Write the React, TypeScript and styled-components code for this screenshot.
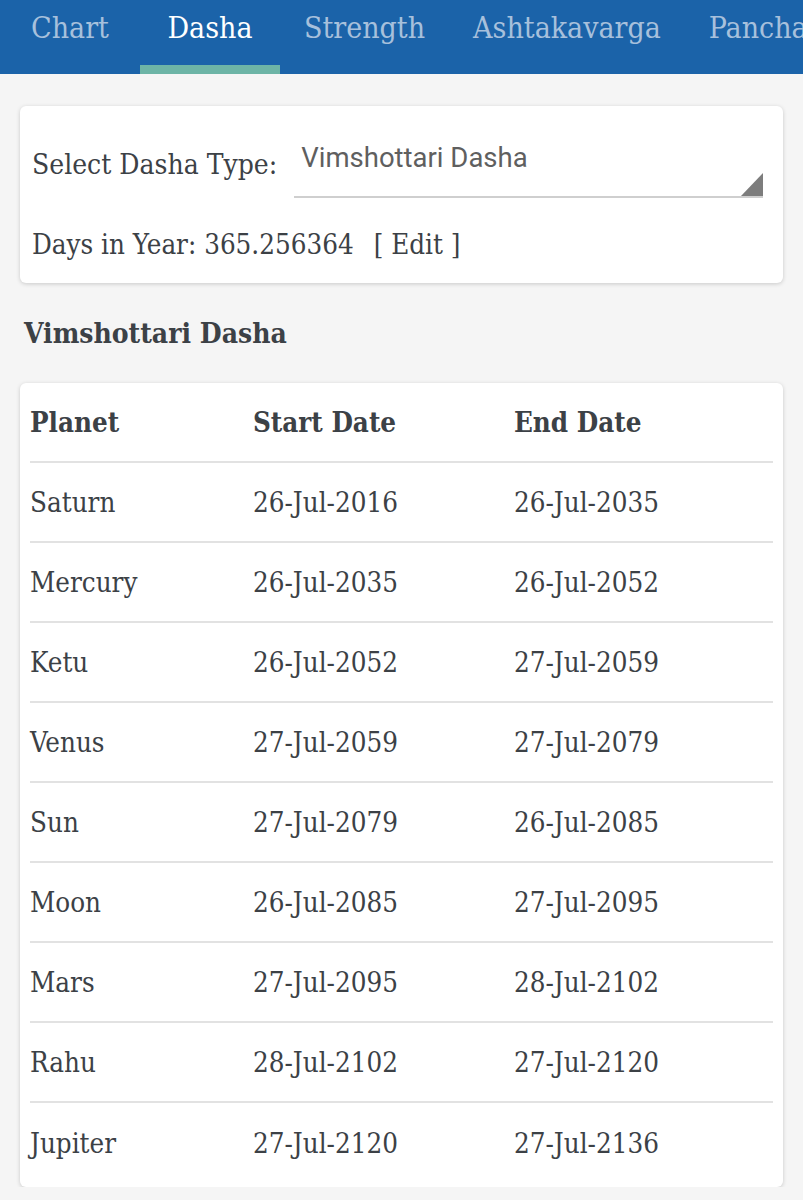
import React from "react"
import styled, { createGlobalStyle } from "styled-components"

const GlobalStyle = createGlobalStyle`
  body {
    margin: 0;
    background: #f5f5f5;
    font-family: "DejaVu Serif Condensed", "DejaVu Serif", serif;
    color: #3c4146;
  }
`

const tabs = ["Chart", "Dasha", "Strength", "Ashtakavarga", "Panchang"]

const dashas = [
  { planet: "Saturn", start: "26-Jul-2016", end: "26-Jul-2035" },
  { planet: "Mercury", start: "26-Jul-2035", end: "26-Jul-2052" },
  { planet: "Ketu", start: "26-Jul-2052", end: "27-Jul-2059" },
  { planet: "Venus", start: "27-Jul-2059", end: "27-Jul-2079" },
  { planet: "Sun", start: "27-Jul-2079", end: "26-Jul-2085" },
  { planet: "Moon", start: "26-Jul-2085", end: "27-Jul-2095" },
  { planet: "Mars", start: "27-Jul-2095", end: "28-Jul-2102" },
  { planet: "Rahu", start: "28-Jul-2102", end: "27-Jul-2120" },
  { planet: "Jupiter", start: "27-Jul-2120", end: "27-Jul-2136" },
]

export default function App() {
  const active = "Dasha"

  return (
    <>
      <GlobalStyle />
      <S.TabBar>
        {tabs.map((t) => (
          <S.Tab key={t} active={t === active}>
            {t}
          </S.Tab>
        ))}
      </S.TabBar>
      <S.Content>
        <S.Card>
          <S.SelectRow>
            <S.Label>Select Dasha Type:</S.Label>
            <S.Select>
              <S.SelectValue>Vimshottari Dasha</S.SelectValue>
              <S.Arrow />
            </S.Select>
          </S.SelectRow>
          <S.DaysRow>
            Days in Year: 365.256364
            <S.EditLink>[ Edit ]</S.EditLink>
          </S.DaysRow>
        </S.Card>
        <S.Heading>Vimshottari Dasha</S.Heading>
        <S.TableCard>
          <S.Row header>
            <div>Planet</div>
            <div>Start Date</div>
            <div>End Date</div>
          </S.Row>
          {dashas.map((d) => (
            <S.Row key={d.planet}>
              <div>{d.planet}</div>
              <div>{d.start}</div>
              <div>{d.end}</div>
            </S.Row>
          ))}
        </S.TableCard>
      </S.Content>
    </>
  )
}

const S = {
  TabBar: styled.div`
    display: flex;
    height: 74px;
    background: #1b63a9;
    overflow: hidden;
    white-space: nowrap;
  `,
  Tab: styled.div<{ active?: boolean }>`
    flex: none;
    min-width: 140px;
    box-sizing: border-box;
    padding: 0 24px 10px;
    display: flex;
    align-items: center;
    justify-content: center;
    font-size: 30px;
    color: ${({ active }) => (active ? "#ffffff" : "#a7c0dc")};
    border-bottom: 9px solid ${({ active }) => (active ? "#6db4a6" : "transparent")};
  `,
  Content: styled.div`
    padding: 32px 20px 0;
  `,
  Card: styled.div`
    background: #fff;
    border-radius: 6px;
    box-shadow: 0 1px 4px rgba(0, 0, 0, 0.18);
    padding: 24px 20px 21px 12px;
  `,
  SelectRow: styled.div`
    display: flex;
    align-items: center;
    height: 68px;
  `,
  Label: styled.div`
    font-size: 28px;
    line-height: 36px;
    padding-top: 2px;
  `,
  Select: styled.div`
    position: relative;
    flex: 1;
    height: 68px;
    box-sizing: border-box;
    margin-left: 17px;
    border-bottom: 2px solid #cfcfcf;
    padding: 10px 7px 0;
  `,
  SelectValue: styled.div`
    font-family: Roboto, "Noto Sans", sans-serif;
    font-size: 27.5px;
    line-height: 36px;
    color: #5f5f5f;
  `,
  Arrow: styled.div`
    position: absolute;
    right: 0;
    bottom: 0;
    width: 0;
    height: 0;
    border-left: 22px solid transparent;
    border-bottom: 23px solid #7d7d7d;
  `,
  DaysRow: styled.div`
    margin-top: 28px;
    font-size: 27.5px;
    line-height: 36px;
  `,
  EditLink: styled.span`
    margin-left: 20px;
    cursor: pointer;
  `,
  Heading: styled.div`
    margin: 33px 0 0 4px;
    font-size: 28px;
    line-height: 36px;
    font-weight: bold;
  `,
  TableCard: styled.div`
    margin-top: 31px;
    background: #fff;
    border-radius: 6px;
    box-shadow: 0 1px 4px rgba(0, 0, 0, 0.18);
    padding: 0 10px 4px;
  `,
  Row: styled.div<{ header?: boolean }>`
    display: grid;
    grid-template-columns: 223px 261px 1fr;
    align-items: center;
    height: 80px;
    box-sizing: border-box;
    border-bottom: 2px solid #e2e2e2;
    font-size: 27.5px;
    font-weight: ${({ header }) => (header ? "bold" : "normal")};
    &:last-child {
      border-bottom: none;
    }
  `,
}
